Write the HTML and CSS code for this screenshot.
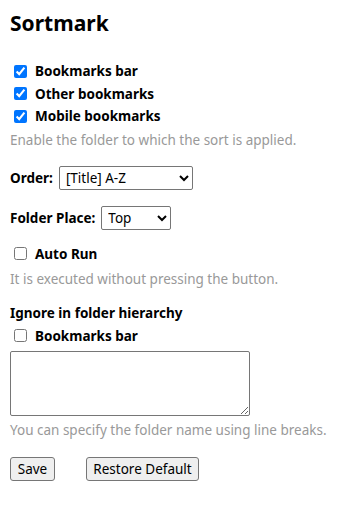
FILE: index.html
```html
<!DOCTYPE html>
<html lang="en">
<head>
<meta charset="utf-8">
<title>Sortmark</title>
<link rel="stylesheet" href="styles.css">
</head>
<body>
<main class="page">
  <h1 class="title">Sortmark</h1>

  <section class="group group-folders">
    <label class="check-row"><input type="checkbox" checked><span>Bookmarks bar</span></label>
    <label class="check-row"><input type="checkbox" checked><span>Other bookmarks</span></label>
    <label class="check-row"><input type="checkbox" checked><span>Mobile bookmarks</span></label>
    <p class="hint hint-folders">Enable the folder to which the sort is applied.</p>
  </section>

  <div class="field field-order">
    <label class="field-label" for="order">Order:</label>
    <select id="order" class="select select-order">
      <option>[Title] A-Z</option>
    </select>
  </div>

  <div class="field field-place">
    <label class="field-label" for="place">Folder Place:</label>
    <select id="place" class="select select-place">
      <option>Top</option>
    </select>
  </div>

  <section class="group group-auto">
    <label class="check-row"><input type="checkbox"><span>Auto Run</span></label>
    <p class="hint hint-auto">It is executed without pressing the button.</p>
  </section>

  <section class="group group-ignore">
    <div class="section-title">Ignore in folder hierarchy</div>
    <label class="check-row"><input type="checkbox"><span>Bookmarks bar</span></label>
    <textarea class="names"></textarea>
    <p class="hint hint-names">You can specify the folder name using line breaks.</p>
  </section>

  <div class="actions">
    <button class="btn btn-save">Save</button>
    <button class="btn btn-restore">Restore Default</button>
  </div>
</main>
</body>
</html>
```

FILE: styles.css
```css
html, body {
  margin: 0;
  padding: 0;
  background: #ffffff;
}

body {
  font-family: "Noto Sans", "DejaVu Sans", sans-serif;
  font-size: 13.5px;
  color: #000000;
}

.page {
  padding: 10px 10px 0 10px;
  display: flex;
  flex-direction: column;
}

.title {
  margin: 0;
  font-size: 21px;
  line-height: 26px;
  font-weight: 700;
}

.group {
  display: flex;
  flex-direction: column;
}

.group-folders {
  margin-top: 24px;
}

.check-row {
  display: flex;
  align-items: center;
  height: 22.5px;
  font-weight: 700;
}

.check-row input {
  width: 13px;
  height: 13px;
  margin: 0 8px 0 4px;
}

.hint {
  margin: 0;
  line-height: 18px;
  color: #999999;
}

.hint-folders {
  margin-top: 3.5px;
}

.field {
  display: flex;
  align-items: center;
  gap: 6px;
}

.field-label {
  font-weight: 700;
}

.field-order {
  margin-top: 17px;
}

.field-place {
  margin-top: 15.5px;
}

.select {
  height: 24px;
  font-family: inherit;
  font-size: 13.5px;
  color: #000000;
  background: #ffffff;
  border: 1px solid #767676;
  border-radius: 2px;
  padding: 0 2px;
}

.select-order {
  width: 134px;
}

.select-place {
  width: 70px;
}

.group-auto {
  margin-top: 13px;
}

.hint-auto {
  margin-top: 4.5px;
}

.group-ignore {
  margin-top: 16px;
}

.section-title {
  font-weight: 700;
  line-height: 18px;
}

.group-ignore .check-row {
  margin-top: 3px;
}

.names {
  box-sizing: border-box;
  width: 240px;
  height: 65px;
  margin: 4px 0 0 0;
  border: 1px solid #767676;
  border-radius: 2px;
  resize: vertical;
}

.hint-names {
  margin-top: 5px;
}

.actions {
  display: flex;
  gap: 31px;
  margin-top: 18px;
}

.btn {
  height: 24px;
  font-family: inherit;
  font-size: 13.5px;
  color: #000000;
  background: #efefef;
  border: 1px solid #767676;
  border-radius: 3px;
  padding: 0;
}

.btn-save {
  width: 45px;
}

.btn-restore {
  width: 113px;
}
```
